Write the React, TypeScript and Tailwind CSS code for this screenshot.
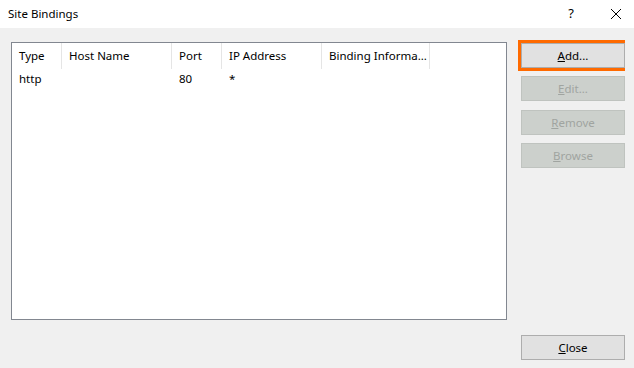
import React from 'react';

const font = { fontFamily: '"Noto Sans", "Open Sans", sans-serif' };

const columns = [
  { label: 'Type', w: 'w-[50px]' },
  { label: 'Host Name', w: 'w-[110px]' },
  { label: 'Port', w: 'w-[50px]' },
  { label: 'IP Address', w: 'w-[100px]' },
  { label: 'Binding Informa...', w: 'w-[108px]' },
];

const row = ['http', '', '80', '*', ''];

function DlgButton({
  label,
  hot,
  disabled,
  className = '',
}: {
  label: string;
  hot: number;
  disabled?: boolean;
  className?: string;
}) {
  return (
    <button
      type="button"
      className={`flex h-[25px] w-[104px] items-center justify-center border text-[11.5px] ${
        disabled
          ? 'border-[#bfc3bf] bg-[#ccd0cc] text-[#a0a4a0]'
          : 'border-[#adadad] bg-[#e1e1e1] text-black'
      } ${className}`}
    >
      {label.slice(0, hot)}
      <span className="underline underline-offset-[1px]">{label[hot]}</span>
      {label.slice(hot + 1)}
    </button>
  );
}

export default function App() {
  return (
    <div className="flex h-[368px] w-[634px] flex-col bg-[#f0f0f0] text-black" style={font}>
      <div className="flex h-[28px] items-center bg-white pl-[8px] text-[11.5px]">
        <span className="flex-1">Site Bindings</span>
        <span className="w-[54px] text-center text-[13px]">?</span>
        <span className="flex w-[36px] items-center justify-center">
          <svg width="12" height="12" viewBox="0 0 12 12">
            <path d="M1 1 L11 11 M11 1 L1 11" stroke="#000" strokeWidth="1" />
          </svg>
        </span>
      </div>
      <div className="flex flex-1 pl-[11px] pt-[14px] pb-[8px]">
        <div className="h-[278px] w-[496px] shrink-0 overflow-hidden border border-[#828790] bg-white text-[11.5px]">
          <div className="flex h-[26px]">
            {columns.map((c) => (
              <div
                key={c.label}
                className={`${c.w} flex shrink-0 items-center border-r border-[#e5e5e5] pl-[7px] whitespace-nowrap`}
              >
                {c.label}
              </div>
            ))}
          </div>
          <div className="flex h-[20px]">
            {row.map((v, i) => (
              <div key={i} className={`${columns[i].w} flex shrink-0 items-center pl-[7px]`}>
                {v}
              </div>
            ))}
          </div>
        </div>
        <div className="ml-[14px] flex flex-col">
          <div className="-ml-[3px] -mt-[2px] w-[107px] border-[3px] border-[#ff6a00]">
            <DlgButton label="Add..." hot={0} className="w-[101px]" />
          </div>
          <DlgButton label="Edit..." hot={0} disabled className="mt-[5px]" />
          <DlgButton label="Remove" hot={0} disabled className="mt-[9px]" />
          <DlgButton label="Browse" hot={0} disabled className="mt-[8px]" />
          <div className="flex-1" />
          <DlgButton label="Close" hot={0} />
        </div>
      </div>
    </div>
  );
}
